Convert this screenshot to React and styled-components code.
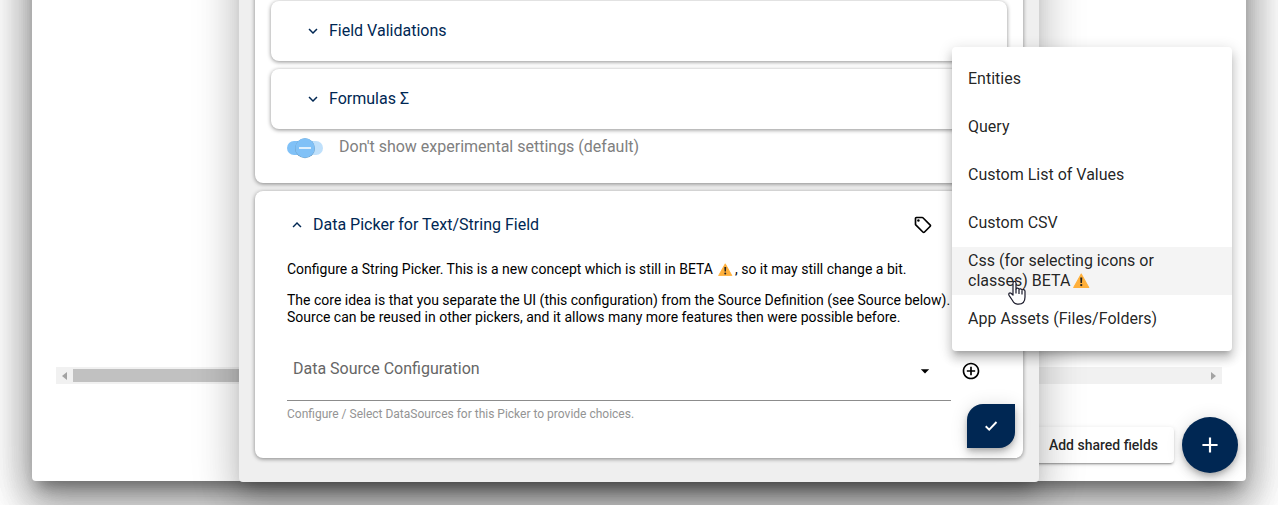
import React from "react";
import styled, { createGlobalStyle } from "styled-components";
import {
  MdKeyboardArrowDown,
  MdKeyboardArrowUp,
  MdOutlineSell,
  MdAddCircleOutline,
  MdArrowDropDown,
  MdAdd,
} from "react-icons/md";

const navy = "#002753";
const dialogShadow =
  "0 11px 15px -7px rgba(0,0,0,.2), 0 24px 38px 3px rgba(0,0,0,.14), 0 9px 46px 8px rgba(0,0,0,.12)";
const raised =
  "0 3px 1px -2px rgba(0,0,0,.2), 0 2px 2px 0 rgba(0,0,0,.14), 0 1px 5px 0 rgba(0,0,0,.12)";
const cardShadow = "0 1px 4px rgba(0,0,0,.45)";
const floating =
  "0 3px 5px -1px rgba(0,0,0,.2), 0 6px 10px 0 rgba(0,0,0,.14), 0 1px 18px 0 rgba(0,0,0,.12)";

const GlobalStyle = createGlobalStyle`
  *, *::before, *::after { box-sizing: border-box; }
  body { margin: 0; background: #fff; font-family: Roboto, "Liberation Sans", sans-serif; overflow: hidden; }
  svg { display: block; flex: none; }
`;

const Page = styled.div`
  position: relative;
  display: flex;
  align-items: flex-end;
  height: 505px;
  padding: 0 32px 24px;
  overflow: hidden;
`;

const FieldsDialog = styled.section`
  display: flex;
  flex: 1;
  flex-direction: column;
  justify-content: flex-end;
  height: 800px;
  padding: 0 8px 8px 24px;
  background: #fff;
  border-radius: 4px;
  box-shadow: ${dialogShadow}, ${dialogShadow};
`;

const Scrollbar = styled.div`
  display: flex;
  align-items: center;
  height: 17px;
  margin: 0 16px 33px 0;
  background: #f1f1f1;
`;

const ScrollArrow = styled.span`
  display: flex;
  justify-content: center;
  width: 17px;
`;

const ScrollThumb = styled.span`
  width: 560px;
  height: 13px;
  margin-right: auto;
  background: #c1c1c1;
`;

const DialogActions = styled.div`
  display: flex;
  align-items: center;
  justify-content: flex-end;
  gap: 8px;
`;

const TextButton = styled.button`
  height: 36px;
  padding: 0 16px;
  border: 0;
  border-radius: 4px;
  background: #fff;
  color: rgba(0, 0, 0, 0.87);
  font: 500 14px/36px Roboto, sans-serif;
  box-shadow: ${raised};
`;

const AddButton = styled.button`
  display: grid;
  place-items: center;
  width: 56px;
  height: 56px;
  padding: 0;
  border: 0;
  border-radius: 50%;
  background: ${navy};
  color: #fff;
  font-size: 26px;
  box-shadow: ${floating};
`;

const EditDialog = styled.section`
  position: absolute;
  left: 239px;
  bottom: 23px;
  display: flex;
  flex-direction: column;
  justify-content: flex-end;
  gap: 8px;
  width: 800px;
  height: 800px;
  padding: 0 16px 24px;
  background: #efefef;
  border-radius: 4px;
  box-shadow: ${dialogShadow};
`;

const Card = styled.div`
  display: flex;
  flex: none;
  flex-direction: column;
  height: ${(p) => p.$height}px;
  padding: ${(p) => p.$padding};
  background: #fff;
  border-radius: 8px;
  box-shadow: ${cardShadow};
`;

const Panel = styled.div`
  display: flex;
  align-items: center;
  gap: 7px;
  flex: none;
  height: 60px;
  margin-bottom: 8px;
  padding: 0 33px;
  border-radius: 8px;
  background: #fff;
  box-shadow: ${cardShadow};
`;

const PanelTitle = styled.h3`
  flex: 1;
  margin: 0;
  color: ${navy};
  font-size: 16px;
  line-height: 24px;
  font-weight: 400;
`;

const Chevron = styled.span`
  color: ${navy};
  font-size: 18px;
`;

const ToggleRow = styled.label`
  display: flex;
  align-items: center;
  gap: 16px;
  height: 24px;
  margin-top: -3px;
  padding-left: 16px;
  color: #808080;
  font-size: 16px;
`;

const CardHeader = styled.header`
  display: flex;
  align-items: center;
  gap: 7px;
  height: 24px;
  padding: 0 58px 0 1px;
`;

const IconBox = styled.span`
  font-size: 20px;
  color: #000;
`;

const Intro = styled.p`
  margin: ${(p) => p.$top}px 0 0 0;
  color: #000;
  font-size: 14px;
  line-height: 17px;
  white-space: nowrap;
`;

const SelectRow = styled.div`
  display: flex;
  align-items: flex-start;
  gap: 10px;
  height: 58px;
  margin-top: 17px;

  & > ${IconBox} {
    margin-top: 18px;
  }
`;

const Select = styled.div`
  display: flex;
  align-items: flex-start;
  justify-content: space-between;
  width: 664px;
  height: 58px;
  padding: 14px 16px 0 6px;
  border-bottom: 1px solid #8c8c8c;
  color: #666;
  font-size: 16px;
  line-height: 24px;
`;

const SelectArrow = styled.span`
  margin-top: 4px;
  color: #000;
  font-size: 20px;
`;

const Hint = styled.div`
  margin-top: 5px;
  color: #949494;
  font-size: 12px;
  line-height: 16px;
`;

const SaveButton = styled.button`
  position: absolute;
  right: 24px;
  bottom: 34px;
  display: grid;
  place-items: center;
  width: 48px;
  height: 44px;
  padding: 0;
  border: 0;
  border-radius: 16px 0 16px 0;
  background: ${navy};
  box-shadow: ${floating};
`;

const Menu = styled.ul`
  position: absolute;
  left: 952px;
  top: 47px;
  width: 280px;
  height: 304px;
  margin: 0;
  padding: 8px 0;
  list-style: none;
  background: #fff;
  border-radius: 4px;
  box-shadow: 0 5px 5px -3px rgba(0,0,0,.2), 0 8px 10px 1px rgba(0,0,0,.14), 0 3px 14px 2px rgba(0,0,0,.12);
`;

const MenuItem = styled.li`
  display: flex;
  align-items: center;
  height: 48px;
  padding: 0 50px 0 16px;
  background: ${(p) => (p.$active ? "#f4f4f4" : "transparent")};
  color: rgba(0, 0, 0, 0.87);
  font-size: 16px;
  line-height: 20px;
`;

const WarningGlyph = styled.svg`
  display: inline-block;
  width: ${(p) => p.$size}px;
  height: ${(p) => p.$size}px;
  margin: 0 ${(p) => p.$gap}px;
  vertical-align: -2px;
`;

const Pointer = styled.svg`
  position: absolute;
  left: 1007px;
  top: 280px;
`;

function Warning({ size, gap = 0 }) {
  return (
    <WarningGlyph $size={size} $gap={gap} viewBox="0 0 16 16">
      <path d="M8 2 15.3 15H.7Z" fill="#ffb03b" stroke="#ffb03b" strokeWidth="1" strokeLinejoin="round" />
      <path d="M7 5.4h2l-.3 5.2H7.3Z" fill="#222" />
      <circle cx="8" cy="12.7" r="1.1" fill="#222" />
    </WarningGlyph>
  );
}

function Toggle() {
  return (
    <svg width="36" height="26" viewBox="0 0 36 26">
      <defs>
        <linearGradient id="track">
          <stop offset="0.5" stopColor="#80c1f7" />
          <stop offset="0.5" stopColor="#bfe0fb" />
        </linearGradient>
      </defs>
      <rect y="8" width="36" height="14" rx="7" fill="url(#track)" />
      <circle cx="18" cy="15.3" r="10" fill="#6d9dc2" />
      <circle cx="18" cy="15" r="9.7" fill="#80c1f7" />
      <path d="M12 15h12" stroke="#dff0fd" strokeWidth="2" />
    </svg>
  );
}

export default function App() {
  return (
    <Page>
      <GlobalStyle />
      <FieldsDialog>
        <Scrollbar>
          <ScrollArrow>
            <svg width="5" height="8"><path d="M5 0v8L0 4Z" fill="#a3a3a3" /></svg>
          </ScrollArrow>
          <ScrollThumb />
          <ScrollArrow>
            <svg width="5" height="8"><path d="M0 0v8l5-4Z" fill="#a3a3a3" /></svg>
          </ScrollArrow>
        </Scrollbar>
        <DialogActions>
          <TextButton>Add shared fields</TextButton>
          <AddButton><MdAdd /></AddButton>
        </DialogActions>
      </FieldsDialog>

      <EditDialog>
        <Card $height={250} $padding="68px 16px 0">
          <Panel>
            <Chevron><MdKeyboardArrowDown /></Chevron>
            <PanelTitle>Field Validations</PanelTitle>
          </Panel>
          <Panel>
            <Chevron><MdKeyboardArrowDown /></Chevron>
            <PanelTitle>Formulas Σ</PanelTitle>
          </Panel>
          <ToggleRow>
            <Toggle />
            Don't show experimental settings (default)
          </ToggleRow>
        </Card>
        <Card $height={267} $padding="22px 32px 0">
          <CardHeader>
            <Chevron><MdKeyboardArrowUp /></Chevron>
            <PanelTitle>Data Picker for Text/String Field</PanelTitle>
            <IconBox><MdOutlineSell /></IconBox>
          </CardHeader>
          <Intro $top={24}>
            Configure a String Picker. This is a new concept which is still in BETA <Warning size={14.5} gap={2} />, so it may still change a bit.
          </Intro>
          <Intro $top={14}>
            The core idea is that you separate the UI (this configuration) from the Source Definition (see Source below).
            <br />
            Source can be reused in other pickers, and it allows many more features then were possible before.
          </Intro>
          <SelectRow>
            <Select>
              Data Source Configuration
              <SelectArrow><MdArrowDropDown /></SelectArrow>
            </Select>
            <IconBox><MdAddCircleOutline /></IconBox>
          </SelectRow>
          <Hint>Configure / Select DataSources for this Picker to provide choices.</Hint>
        </Card>
        <SaveButton>
          <svg width="14" height="12" viewBox="0 0 14 12">
            <path d="M1.700 6.300 5.200 9.600 12.500 2" fill="none" stroke="#fff" strokeWidth="1.900" />
          </svg>
        </SaveButton>
      </EditDialog>

      <Menu>
        <MenuItem>Entities</MenuItem>
        <MenuItem>Query</MenuItem>
        <MenuItem>Custom List of Values</MenuItem>
        <MenuItem>Custom CSV</MenuItem>
        <MenuItem $active>
          <span>Css (for selecting icons or classes) BETA <Warning size={16.5} gap={-1} /></span>
        </MenuItem>
        <MenuItem>App Assets (Files/Folders)</MenuItem>
      </Menu>

      <Pointer width="20" height="26" viewBox="0 0 20 26">
        <path
          d="M6 14V3.200C6 .8 9 .8 9 3.200V9c.3-1.300 3-1.200 3 .6.4-1.300 3-1 3 .7.500-1.200 3-.8 3 1V17c0 4.500-2.500 7.200-6.500 7.200-3 0-4.800-1.300-6-3.700L2.200 15.600C1 13.500 2.700 12.200 4 13.200L6 15Z"
          fill="#fff" stroke="#1a1a2a" strokeWidth="1.200" strokeLinejoin="round"
        />
        <path d="M9 9v4.500M12 10v4M15 11v3.500" stroke="#1a1a2a" strokeWidth="1.200" />
      </Pointer>
    </Page>
  );
}
